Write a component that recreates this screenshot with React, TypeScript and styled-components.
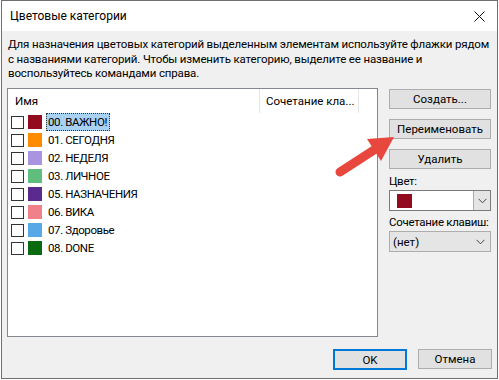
import React from "react";
import styled, { createGlobalStyle } from "styled-components";

const Global = createGlobalStyle`
  html, body { margin: 0; padding: 0; background: #ffffff; }
  body { font-family: Roboto, "Liberation Sans", Arial, sans-serif; font-size: 11.5px; color: #000; }
`;

const Window = styled.div`
  position: relative;
  box-sizing: border-box;
  margin-left: 1px;
  width: 497px;
  height: 379px;
  border: 1px solid #6f6f6f;
  display: flex;
  flex-direction: column;
  background: #f0f0f0;
`;

const TitleBar = styled.div`
  height: 30px;
  background: #ffffff;
  display: flex;
  align-items: center;
  justify-content: space-between;
  padding: 0 12px 0 8px;
  font-size: 12px;
`;

const Body = styled.div`
  flex: 1;
  display: flex;
  flex-direction: column;
  padding: 6px 5px 0 5px;
`;

const Description = styled.p`
  margin: 0 0 0 1px;
  line-height: 14.5px;
  height: 44px;
  white-space: nowrap;
  letter-spacing: -0.15px;
`;

const Main = styled.div`
  display: flex;
  gap: 11px;
  margin-top: 7px;
`;

const ListBox = styled.div`
  box-sizing: border-box;
  width: 371px;
  height: 249px;
  background: #fff;
  border: 1px solid #828790;
  display: flex;
  flex-direction: column;
`;

const ListHeader = styled.div`
  display: grid;
  grid-template-columns: 252px 99px 1fr;
  height: 24px;
`;

const HeaderCell = styled.div<{ $pad: number }>`
  display: flex;
  align-items: center;
  padding-left: ${(p) => p.$pad}px;
  border-right: 1px solid #e5e5e5;
  white-space: nowrap;
  overflow: hidden;
  &:last-child { border-right: none; }
`;

const Row = styled.div`
  display: flex;
  align-items: center;
  height: 18px;
  padding-left: 3px;
`;

const CheckBox = styled.span`
  box-sizing: border-box;
  width: 13px;
  height: 13px;
  border: 1px solid #333;
  background: #fff;
  margin-right: 4px;
`;

const Swatch = styled.span<{ $c: string }>`
  width: 14px;
  height: 14px;
  background: ${(p) => p.$c};
  margin-right: 4px;
`;

const Label = styled.span<{ $sel?: boolean }>`
  box-sizing: border-box;
  height: 18px;
  display: flex;
  align-items: center;
  padding: 0 2px 0 1px;
  letter-spacing: -0.4px;
  border: 1px dotted ${(p) => (p.$sel ? "#333" : "transparent")};
  background: ${(p) => (p.$sel ? "#a9d1f2" : "transparent")};
`;

const Side = styled.div`
  width: 102px;
  display: flex;
  flex-direction: column;
  padding-top: 1px;
`;

const Button = styled.button<{ $w?: string; $default?: boolean; $mb?: number }>`
  box-sizing: border-box;
  height: ${(p) => (p.$default ? 21 : 20)}px;
  width: ${(p) => p.$w ?? "100%"};
  margin: 0 0 ${(p) => p.$mb ?? 0}px 0;
  background: #e1e1e1;
  border: ${(p) => (p.$default ? "2px solid #0078d7" : "1px solid #adadad")};
  font-family: inherit;
  font-size: 11.5px;
  color: #000;
  padding: 0;
  display: flex;
  align-items: center;
  justify-content: center;
`;

const FieldLabel = styled.div`
  line-height: 15px;
  margin: 0 0 1px 0;
  white-space: nowrap;
  letter-spacing: -0.3px;
`;

const Combo = styled.div<{ $gray?: boolean }>`
  box-sizing: border-box;
  height: 21px;
  display: flex;
  align-items: center;
  border: 1px solid ${(p) => (p.$gray ? "#adadad" : "#7a7a7a")};
  background: ${(p) => (p.$gray ? "#e5e5e5" : "#fff")};
  margin-bottom: 4px;
`;

const ComboValue = styled.div`
  flex: 1;
  display: flex;
  align-items: center;
  padding-left: 3px;
`;

const ComboSwatch = styled.span`
  width: 15px;
  height: 14px;
  background: #920b1e;
  margin-left: 4px;
`;

const DropButton = styled.div<{ $bordered?: boolean }>`
  width: 16px;
  height: 100%;
  display: flex;
  align-items: center;
  justify-content: center;
  background: ${(p) => (p.$bordered ? "#e5e5e5" : "transparent")};
  border-left: ${(p) => (p.$bordered ? "1px solid #adadad" : "none")};
  margin-right: ${(p) => (p.$bordered ? 0 : 2)}px;
`;

const Footer = styled.div`
  display: flex;
  justify-content: flex-end;
  gap: 11px;
  margin-top: 12px;
`;

const ArrowLayer = styled.svg`
  position: absolute;
  left: -1px;
  top: -1px;
  pointer-events: none;
`;

const Chevron = () => (
  <svg width="9" height="6" viewBox="0 0 9 6">
    <polyline points="0.5,0.8 4.5,4.8 8.5,0.8" fill="none" stroke="#444" strokeWidth="1" />
  </svg>
);

const categories = [
  { name: "00. ВАЖНО!", color: "#920b1e", sel: true },
  { name: "01. СЕГОДНЯ", color: "#ff8c00" },
  { name: "02. НЕДЕЛЯ", color: "#a894e0" },
  { name: "03. ЛИЧНОЕ", color: "#5fbd7d" },
  { name: "05. НАЗНАЧЕНИЯ", color: "#5a2a8e" },
  { name: "06. ВИКА", color: "#f0808a" },
  { name: "07. Здоровье", color: "#56a8e6" },
  { name: "08. DONE", color: "#0a6a0f" },
];

export default function App() {
  return (
    <>
      <Global />
      <Window>
        <TitleBar>
          <span>Цветовые категории</span>
          <svg width="11" height="11" viewBox="0 0 11 11">
            <path d="M0.5 0.5 L10.5 10.5 M10.5 0.5 L0.5 10.5" stroke="#111" strokeWidth="1" />
          </svg>
        </TitleBar>
        <Body>
          <Description>
            Для назначения цветовых категорий выделенным элементам используйте флажки рядом
            <br />
            с названиями категорий. Чтобы изменить категорию, выделите ее название и
            <br />
            воспользуйтесь командами справа.
          </Description>
          <Main>
            <ListBox>
              <ListHeader>
                <HeaderCell $pad={7}>Имя</HeaderCell>
                <HeaderCell $pad={6}>Сочетание кла...</HeaderCell>
                <HeaderCell $pad={0} />
              </ListHeader>
              {categories.map((c) => (
                <Row key={c.name}>
                  <CheckBox />
                  <Swatch $c={c.color} />
                  <Label $sel={c.sel}>{c.name}</Label>
                </Row>
              ))}
            </ListBox>
            <Side>
              <Button $mb={10}>Создать...</Button>
              <Button $mb={10}>Переименовать</Button>
              <Button $mb={5}>Удалить</Button>
              <FieldLabel>Цвет:</FieldLabel>
              <Combo>
                <ComboValue>
                  <ComboSwatch />
                </ComboValue>
                <DropButton $bordered>
                  <Chevron />
                </DropButton>
              </Combo>
              <FieldLabel>Сочетание клавиш:</FieldLabel>
              <Combo $gray>
                <ComboValue>(нет)</ComboValue>
                <DropButton>
                  <Chevron />
                </DropButton>
              </Combo>
            </Side>
          </Main>
          <Footer>
            <Button $default $w="74px">OK</Button>
            <Button $w="74px">Отмена</Button>
          </Footer>
        </Body>
        <ArrowLayer width="499" height="380" viewBox="0 0 499 380">
          <line x1="339" y1="172" x2="373" y2="150" stroke="#e8473e" strokeWidth="9" strokeLinecap="round" />
          <polygon points="393,137 380,161 366,139" fill="#e8473e" />
        </ArrowLayer>
      </Window>
    </>
  );
}
